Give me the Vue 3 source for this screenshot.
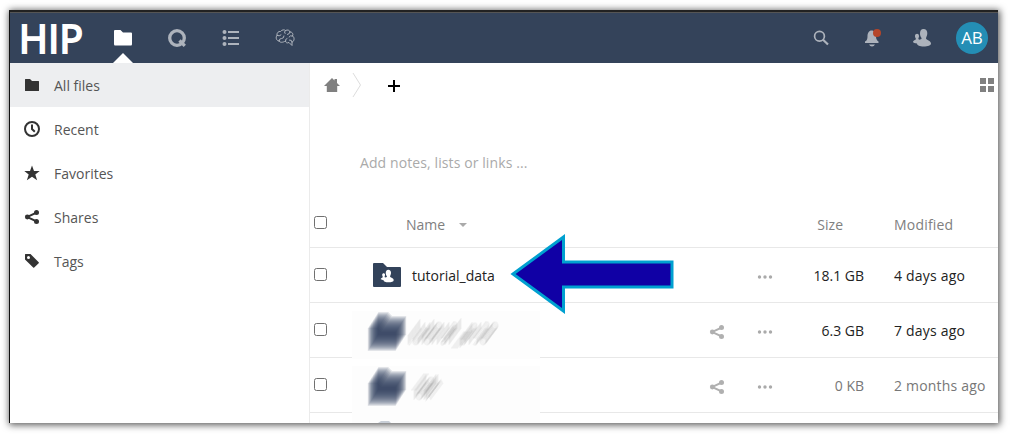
<script setup>
const nav = [
  { label: 'All files', icon: 'folder' },
  { label: 'Recent', icon: 'clock' },
  { label: 'Favorites', icon: 'star' },
  { label: 'Shares', icon: 'share' },
  { label: 'Tags', icon: 'tag' },
]
const rows = [
  { name: 'tutorial_data', size: '18.1 GB', modified: '4 days ago' },
  { scribble: 'M2 -5V4Q3 5 4 5M7 -2V3Q9 6 12 4V-2M16 -5V5M21 -2A3 3.500 0 1 0 21.100 -2M26 5V-2M31 -2V5M35 -2Q39 -3 39 1V5M39 1Q34 1 35 4T39 3M43 -6V5M45 8H52M54 -2V8M54 0Q59 -3 59 2T54 4M63 -2V5M67 -2Q72 -3 71 2T67 4M77 -2A3 3.500 0 1 0 77.100 -2', size: '6.3 GB', modified: '7 days ago', share: true },
  { scribble: 'M5 -5H11M8 -5V5M13 -2A3 3.500 0 1 0 13.100 -2M18 -5V5M20 -5V5L23 1L25 5', size: '0 KB', modified: '2 months ago', share: true, old: true },
]
const smear = Array.from({ length: 17 }, (_, i) => i - 8)
</script>

<template>
  <div class="page">
  <div class="window">
    <header>
      <div class="logo">HIP</div>
      <nav class="apps">
        <div class="app active">
          <svg width="18" height="16" viewBox="0 0 18 16"><path d="M0 1Q0 0 1 0H6.500L9 2.500H17Q18 2.500 18 3.500V14Q18 15.500 17 15.500H1Q0 15.500 0 14Z" fill="#fff"/></svg>
        </div>
        <div class="app">
          <svg width="20" height="20" viewBox="0 0 20 20" fill="none" stroke="#adb3bc" stroke-width="3.300"><circle cx="10" cy="10" r="7.300"/><path d="M12.500 12.500L17.800 17.800"/></svg>
        </div>
        <div class="app">
          <svg width="18" height="18" viewBox="0 0 18 18" fill="#adb3bc"><circle cx="2.500" cy="3" r="2"/><circle cx="2.500" cy="9" r="2"/><circle cx="2.500" cy="15" r="2"/><path d="M6 2h11v2H6zM6 8h11v2H6zM6 14h11v2H6z"/></svg>
        </div>
        <div class="app">
          <svg width="20" height="18" viewBox="0 0 20 18" fill="none" stroke="#adb3bc" stroke-width="1" stroke-linecap="round"><path d="M4 12C1 12 .5 8 2 6.500C1.500 4 3.500 2 5.500 2.500C7 .5 9.500 .5 10.500 1.500C12.500 .5 14.500 1 15 3C17.500 3 18.500 5 17.500 7C19.800 8 19.500 12.500 17 13V16.500L14 13.500C12 14.500 10.500 13.500 10.500 12C8 13.500 5 14 4 12ZM10.500 1.500Q8.500 3 10 4.500M2 6.500Q4.500 7.500 6 6M4 12Q4 9.500 6.500 9.500T9 7M10.500 12Q10 10 12 9.500M15 3Q15 5 12.500 5.500M17.500 7Q15 6 14 8M17 13Q17 10.500 14.500 11"/></svg>
        </div>
      </nav>
      <div class="tools">
        <svg width="16" height="16" viewBox="0 0 16 16" fill="none" stroke="#adb3bc"><circle cx="6.500" cy="6.200" r="4.900" stroke-width="1.700"/><path d="M9.800 9.500L15 14.500" stroke-width="2.200"/></svg>
        <svg width="18" height="20" viewBox="0 0 18 20"><path d="M7.500 2.500C10.500 2.500 12 5 12 8.500C12 11 13 12.500 14.500 13.500V15H1V13.500C3 12.500 3.500 11 3.500 8C3.500 5 5 2.500 7.500 2.500ZM5 16.500H11Q10 18.500 8 18.500T5 16.500Z" fill="#adb3bc"/><circle cx="13" cy="5" r="4" fill="#b5462a"/></svg>
        <svg width="20" height="20" viewBox="0 0 20 20"><use href="#people" fill="#adb3bc"/></svg>
        <div class="avatar">AB</div>
      </div>
    </header>

    <div class="body">
      <aside>
        <div v-for="(n, i) in nav" :key="n.label" class="entry" :class="{ selected: i === 0 }">
          <svg width="16" height="16" viewBox="0 0 16 16" fill="#333">
            <path v-if="n.icon === 'folder'" d="M1 2.500Q1 2 1.500 2H6L8 4H14.500Q15 4 15 4.500V13.500Q15 14 14.500 14H1.500Q1 14 1 13.500Z"/>
            <g v-else-if="n.icon === 'clock'" fill="none" stroke="#333" stroke-width="2"><circle cx="8" cy="8" r="7"/><path d="M8 3.500V8L10.800 10.700"/></g>
            <path v-else-if="n.icon === 'star'" d="M8 .5L10 5.900H15.700L11.300 9.400L13.100 15.200L8 11.700L2.900 15.200L4.700 9.400L.3 5.900H6Z"/>
            <use v-else-if="n.icon === 'share'" href="#share"/>
            <path v-else fill-rule="evenodd" d="M1.500 1H6.500L14.700 9.200Q15.200 9.700 14.700 10.200L10.200 14.600Q9.700 15 9.200 14.600L1 6.500V1.500Q1 1 1.500 1ZM4.500 3A1.500 1.500 0 1 0 4.500 6A1.500 1.500 0 1 0 4.500 3Z"/>
          </svg>
          <span>{{ n.label }}</span>
        </div>
      </aside>

      <main>
        <div class="crumbs">
          <svg class="home" width="16" height="16" viewBox="0 0 16 16" fill="#808080"><path d="M8 1L10.500 3.500V2H13V6L16 9H13.200V15H2.800V9H0Z"/></svg>
          <svg class="chevron" width="10" height="26" viewBox="0 0 10 26" fill="none" stroke="#ddd"><path d="M1 1L8.500 13L1 25"/></svg>
          <svg class="plus" width="12" height="12" viewBox="0 0 12 12"><path d="M5 0h2v5h5v2H7v5H5V7H0V5h5z"/></svg>
          <svg class="grid" width="14" height="14" viewBox="0 0 14 14" fill="#808080"><path d="M0 0h6v6H0zM8 0h6v6H8zM0 8h6v6H0zM8 8h6v6H8z"/></svg>
        </div>
        <div class="notes">Add notes, lists or links ...</div>
        <div class="row head">
          <i class="check"></i>
          <div class="name">Name<svg width="8" height="4" viewBox="0 0 8 4"><path d="M0 0H8L4 4Z" fill="#aaa"/></svg></div>
          <div class="size">Size</div>
          <div class="date">Modified</div>
        </div>
        <div v-for="r in rows" :key="r.size" class="row" :class="{ old: r.old }">
          <i class="check"></i>
          <div v-if="r.name" class="name">
            <svg class="thumb" width="28" height="24" viewBox="0 0 28 24"><path d="M0 1Q0 0 1 0H10L14 4H27Q28 4 28 5V23Q28 24 27 24H1Q0 24 0 23Z" fill="#32425a"/><g transform="translate(7 6) scale(.72)" fill="#fff"><use href="#people"/></g></svg>
            <span>{{ r.name }}</span>
          </div>
          <div v-else class="name">
            <svg class="hidden-name" width="188" height="55" viewBox="0 0 188 55">
              <rect y="7" width="188" height="48" fill="#fdfdfd"/>
              <path v-for="s in smear" :key="s" :transform="`translate(${s * .65} ${-s})`" d="M21 16H31L35 20H49V39H21Z" fill="#2c405c" opacity=".13"/>
              <g fill="none" stroke="#777" stroke-width="1.500">
                <path v-for="s in smear" :key="s" :transform="`translate(${60 + s * .75} ${28 - s})`" :d="r.scribble" opacity=".07"/>
              </g>
            </svg>
          </div>
          <svg v-if="r.share" class="act" width="16" height="16" viewBox="0 0 16 16" fill="#b0b0b0"><use href="#share"/></svg>
          <svg class="dots" width="16" height="4" viewBox="0 0 16 4" fill="#aaa"><circle cx="2.500" cy="2" r="1.700"/><circle cx="8" cy="2" r="1.700"/><circle cx="13.500" cy="2" r="1.700"/></svg>
          <div class="size">{{ r.size }}</div>
          <div class="date">{{ r.modified }}</div>
        </div>
        <div class="last">
          <svg width="188" height="10" viewBox="0 0 188 10"><rect width="188" height="10" fill="#fdfdfd"/><path d="M26 10L29 8H37L39 10Z" fill="#2c4263" opacity=".25"/></svg>
        </div>
      </main>
    </div>
    <svg class="arrow" width="164" height="82" viewBox="0 0 164 82"><path d="M3 41L53.500 4V29H162V54H53.500V78Z" fill="#1000a5" stroke="#00a0d0" stroke-width="3"/></svg>
    <svg width="0" height="0" class="defs">
      <defs>
        <g id="share"><circle cx="3.300" cy="8" r="2.400"/><circle cx="12.500" cy="3.500" r="2.500"/><circle cx="12.500" cy="12.500" r="2.500"/><path d="M3 7L12 2.700L13 4.600L5.500 8L13 11.400L12 13.300L3 9Z"/></g>
        <path id="people" d="M11.500 1C14 1 15.500 3 15.300 5.500C15.200 7.500 14.200 9 14 10.500C14.200 12.200 19 12.500 19 15.500C19 17.500 16 18.500 11.500 18.500C8 18.500 5 17.500 5 15.500C3 15.400 1 15 1 13.800C1 12.300 3.600 12.300 4 11C3.500 10 3 9.300 3 8C3 5.200 7 5 7 8C7 9.300 6.500 10 6.300 11L7.300 11.800L9.500 11V10C8.500 8.500 8 7.500 8 5.500C8 3 9 1 11.500 1Z"/>
      </defs>
    </svg>
  </div>
  </div>
</template>

<style>
body { background: #fff; }
</style>
<style scoped>
* { box-sizing: border-box; }
svg { display: block; flex: none; }
.page { height: 434px; padding: 10px 0 0 9px; overflow: hidden; }
.window { position: relative; width: 989px; height: 413px; border-left: 1px solid #111; border-top: 2px solid #222; background: #fff; box-shadow: 1px 1px 7px 1px rgba(0,0,0,.65); font: 14px/20px "Open Sans", "Noto Sans", sans-serif; color: #222; display: flex; flex-direction: column; }
header { height: 51px; flex: none; background: #34435a; border-top: 1px solid #555; display: flex; }
.logo { width: 86px; padding-left: 9px; font-size: 39px; line-height: 50px; color: #fff; letter-spacing: .4px; -webkit-text-stroke: 2px #fff; }
.apps { display: flex; }
.app { width: 54px; display: flex; align-items: center; justify-content: center; position: relative; }
.active::after { content: ""; position: absolute; bottom: 0; left: 17px; border: 10px solid transparent; border-bottom-color: #fff; border-top: 0; }
.tools { margin-left: auto; display: flex; align-items: center; padding-right: 10px; }
.tools svg:nth-child(1) { margin-right: 35px; }
.tools svg:nth-child(2) { margin-right: 30px; }
.tools svg:nth-child(3) { margin-right: 24px; }
.avatar { width: 32px; height: 32px; border-radius: 50%; background: #248eb5; color: #fff; font-size: 17px; line-height: 32px; text-align: center; }
.body { display: flex; flex: 1; min-height: 0; }
aside { width: 300px; border-right: 1px solid #ebebeb; flex: none; }
.entry { height: 44px; display: flex; align-items: center; padding-left: 14px; gap: 14px; color: #555; }
.entry span { padding-top: 2px; }
.selected { background: #edeef0; }
main { flex: 1; overflow: hidden; }
.crumbs { height: 44px; display: flex; align-items: center; padding: 0 4px 0 14px; }
.chevron { margin-left: 12px; }
.plus { margin: 2px 0 0 26px; }
.grid { margin-left: auto; }
.notes { height: 96px; padding: 46px 0 0 50px; color: #aaa; letter-spacing: .1px; }
.row { height: 55px; border-bottom: 1px solid #e8e8e8; display: grid; grid-template-columns: 42px 350px 48px 72px 42px 30px 1fr; align-items: center; }
.head { height: 45px; color: #808080; }
.old { color: #777; }
.check { grid-column: 1; width: 13px; height: 13px; border: 1px solid #707070; border-radius: 2.500px; margin: 0 0 1px 4px; }
.head .check { margin-bottom: 5px; }
.name { grid-column: 2; display: flex; align-items: center; }
.head .name { padding-left: 54px; gap: 14px; }
.name span { padding-top: 2px; }
.thumb { margin: 0 11px 0 21px; }
.hidden-name { margin: -1px 0; position: relative; top: 1px; }
.act { grid-column: 3; margin: 4px 0 0 7px; }
.dots { grid-column: 4; margin: 4px 0 0 7px; }
.size { grid-column: 4 / 6; text-align: right; grid-row: 1; padding-top: 2px; }
.head .size { padding: 0 21px 0 0; }
.name, .check, .act, .dots, .date { grid-row: 1; }
.date { grid-column: 7; white-space: nowrap; padding-top: 2px; letter-spacing: .2px; }
.head .date { padding-top: 0; }
.last { height: 10px; padding-left: 42px; }
.arrow { position: absolute; left: 500px; top: 221px; }
.defs { position: absolute; }
</style>
